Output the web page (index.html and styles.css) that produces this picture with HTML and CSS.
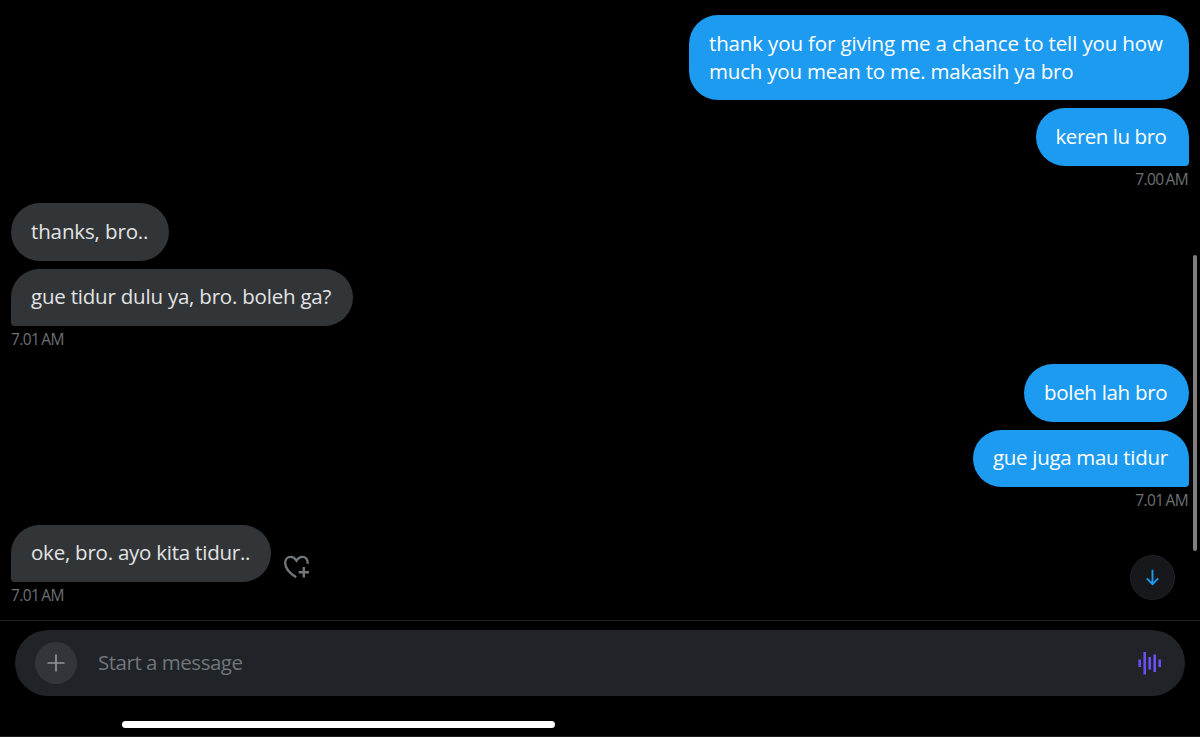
FILE: index.html
```html
<!DOCTYPE html>
<html lang="id">
<head>
    <meta charset="UTF-8">
    <meta name="viewport" content="width=device-width, initial-scale=1.0">
    <title>Messages</title>
    <link rel="stylesheet" href="styles.css">
</head>
<body>
    <main class="chat">
        <section class="group sent">
            <p class="bubble long">thank you for giving me a chance to tell you how<br><span class="second">much you mean to me. makasih ya bro</span></p>
            <p class="bubble last keren">keren lu bro</p>
            <time class="time">7.00 AM</time>
        </section>

        <section class="group received">
            <p class="bubble thanks">thanks, bro..</p>
            <p class="bubble last dulu">gue tidur dulu ya, bro. boleh ga?</p>
            <time class="time">7.01 AM</time>
        </section>

        <section class="group sent">
            <p class="bubble boleh">boleh lah bro</p>
            <p class="bubble last juga">gue juga mau tidur</p>
            <time class="time">7.01 AM</time>
        </section>

        <section class="group received">
            <div class="row">
                <p class="bubble last oke">oke, bro. ayo kita tidur..</p>
                <svg class="react" viewBox="0 0 28 26" aria-label="Add reaction">
                    <path d="M13.2 23.2C6.500 19 2.200 14 2.200 8.900C2.200 5.200 4.600 2.900 7.500 2.900C10 2.900 12 4.200 13.500 6.600C15 4.200 17 2.900 19.500 2.900C22.400 2.900 24.800 5.200 24.800 9.700M20.800 13V23.400M15.600 18.200H26"/>
                </svg>
            </div>
            <time class="time">7.01 AM</time>
        </section>

        <button class="jump" aria-label="Jump to latest">
            <svg viewBox="0 0 16 16"><path d="M8 0.800V14M2.600 8.800L8 14.200L13.400 8.800"/></svg>
        </button>
        <div class="scrollbar"></div>
    </main>

    <footer class="composer">
        <div class="field">
            <button class="add" aria-label="Add">
                <svg viewBox="0 0 18 18"><path d="M9 0.500V17.500M0.500 9H17.500"/></svg>
            </button>
            <span class="placeholder">Start a message</span>
            <svg class="voice" viewBox="0 0 24 24" aria-label="Voice message">
                <path d="M1.700 8.500V16M6.700 1V23.500M11.700 6V18.500M16.700 3.500V21M21.700 8.500V16"/>
            </svg>
        </div>
        <div class="home-bar"></div>
    </footer>
</body>
</html>
```

FILE: styles.css
```css
* {
    box-sizing: border-box;
}

body {
    margin: 0;
    height: 737px;
    overflow: hidden;
    background: #000;
    color: #fff;
    font-family: "Open Sans", "Liberation Sans", sans-serif;
    display: flex;
    flex-direction: column;
}

button {
    border: none;
    padding: 0;
}

svg {
    fill: none;
    stroke: currentColor;
}

.chat {
    position: relative;
    height: 620px;
    padding: 15px 11px 0;
}

.group {
    display: flex;
    flex-direction: column;
    align-items: flex-start;
}

.sent {
    align-items: flex-end;
}

.bubble {
    margin: 0 0 8px;
    padding: 13.500px 20px 15.500px;
    border-radius: 29px;
    background: #323538;
    color: #e2e3e4;
    font-size: 20.500px;
    line-height: 28px;
    min-height: 57.500px;
    white-space: nowrap;
}

.sent .bubble {
    background: #1d9bf0;
    color: #fff;
}

.bubble.last {
    margin-bottom: 0;
    border-bottom-left-radius: 4px;
}

.sent .bubble.last {
    border-radius: 29px 29px 4px 29px;
}

.long {
    width: 500px;
    letter-spacing: -0.140px;
}

.second {
    letter-spacing: -0.200px;
}

.keren {
    width: 153.500px;
    letter-spacing: -0.450px;
}

.thanks {
    width: 158px;
    letter-spacing: -0.130px;
}

.dulu {
    width: 342px;
    letter-spacing: -0.210px;
}

.boleh {
    width: 165px;
    letter-spacing: -0.300px;
}

.juga {
    width: 216px;
    letter-spacing: -0.310px;
}

.oke {
    width: 260px;
    letter-spacing: -0.230px;
}

.time {
    height: 37.800px;
    padding-top: 3px;
    color: #6e7175;
    font-size: 15.500px;
    line-height: 20px;
    letter-spacing: -0.600px;
    word-spacing: -1.500px;
}

.sent .time {
    padding-right: 1px;
}

.row {
    display: flex;
    align-items: center;
    gap: 12px;
}

.react {
    width: 28px;
    height: 26px;
    margin-top: 27px;
    color: #72767a;
    stroke-width: 2.400;
}

.jump {
    position: absolute;
    top: 555px;
    right: 25px;
    width: 45px;
    height: 45px;
    border: 1px solid #202326;
    border-radius: 50%;
    background: #16181c;
    color: #1d9bf0;
    display: flex;
    align-items: center;
    justify-content: center;
}

.jump svg {
    width: 17px;
    height: 17px;
    stroke-width: 1.800;
}

.scrollbar {
    position: absolute;
    top: 255px;
    right: 3px;
    width: 4px;
    height: 296px;
    border-radius: 2px;
    background: #7f7f7f;
}

.composer {
    height: 117px;
    padding: 9px 15px 0;
    border-top: 1px solid #222426;
    border-bottom: 1px solid #1e1e1e;
}

.field {
    display: flex;
    align-items: center;
    height: 65.500px;
    padding: 0 23px 0 20px;
    border-radius: 33px;
    background: #202327;
}

.add {
    width: 42px;
    height: 42px;
    border-radius: 50%;
    background: #323539;
    color: #929497;
    display: flex;
    align-items: center;
    justify-content: center;
}

.add svg {
    width: 18px;
    height: 18px;
    stroke-width: 1.700;
}

.placeholder {
    flex: 1;
    margin: -2px 0 0 21px;
    color: #72767a;
    font-size: 20.500px;
    line-height: 28px;
    letter-spacing: -0.480px;
}

.voice {
    width: 24px;
    height: 24px;
    color: #6b4ff0;
    stroke-width: 2.600;
}

.home-bar {
    width: 433px;
    height: 7px;
    margin: 25px 0 0 107px;
    border-radius: 4px;
    background: #fff;
}
```
